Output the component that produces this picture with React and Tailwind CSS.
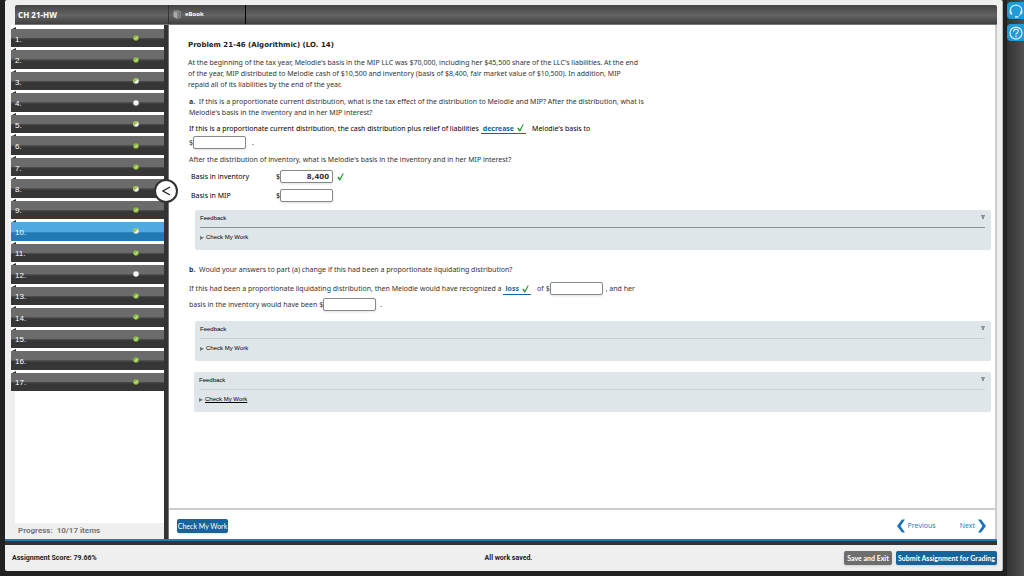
const ITEMS = [
  'full', 'full', 'half', 'empty', 'half', 'full', 'full', 'half', 'full',
  'half', 'full', 'empty', 'full', 'full', 'full', 'full', 'full',
];
const CURRENT = 10;

function StatusDot({ status }) {
  return (
    <svg viewBox="0 0 12 12" className="size-[6px]" aria-label={status}>
      <circle cx="6" cy="6" r="5.5" fill={status === 'full' ? '#8dbb3c' : '#f2f2f2'} />
      {status === 'half' && <path d="M10 2A5.6 5.6 0 1 0 2 10Z" fill="#9bc63f" />}
      {status === 'full' && (
        <path d="M3.5 6.5l2 2 3.5-5" fill="none" stroke="#f4fae4" strokeWidth="1.6" />
      )}
    </svg>
  );
}

function Check() {
  return (
    <svg viewBox="0 0 14 16" className="w-[7px] h-[8px]" aria-label="correct">
      <path d="M0.5 8.5L3.5 7l2 4L11.5 0.5 13.5 1 6.5 15H4.500Z" fill="#2f9c33" />
    </svg>
  );
}

function NavItem({ number, status }) {
  const active = number === CURRENT;
  return (
    <li className="relative flex-1 pt-[3px]">
      <svg viewBox="0 0 4 2" className="absolute left-px top-px w-1 h-[2px]" aria-hidden="true">
        <path d="M0 2L4 0V2Z" fill="#333" />
      </svg>
      <a
        href={`#item-${number}`}
        className={
          'flex h-full items-center justify-between pl-1 pr-[25px] font-[Liberation_Sans,sans-serif] text-[8px] leading-none text-white ' +
          (active
            ? 'bg-[linear-gradient(#4fabdf_50%,#3b93c8_50%,#217ab1_60%)]'
            : 'bg-[linear-gradient(#6b6b6b_48%,#505050_50%,#363636_60%)]')
        }
      >
        <span className="pt-[3px]">{number}.</span>
        <StatusDot status={status} />
      </a>
    </li>
  );
}

function AmountInput({ label, value }) {
  return (
    <span className="inline-flex items-center">
      $
      <input
        type="text"
        aria-label={label}
        defaultValue={value}
        className="h-[13px] w-[53px] rounded-[2px] border border-[#888] bg-white px-[3px] text-right font-[DejaVu_Sans,sans-serif] text-[7px] font-bold text-[#333] shadow-sm"
      />
    </span>
  );
}

function Answer({ children }) {
  return (
    <button type="button" className="inline-flex h-[12px] items-center gap-[3px] border-b border-[#17639c] px-[2px] pt-px font-bold text-[#17639c]">
      {children}
      <Check />
    </button>
  );
}

function Feedback({ className, line, underline }) {
  return (
    <section className={'h-10 rounded-[2px] bg-[#dee6e9] pl-[5px] pr-[6px] font-[Liberation_Sans,sans-serif] text-[6px] text-black ' + className}>
      <div className={'flex h-[18px] items-center justify-between border-b ' + line}>
        <h3>Feedback</h3>
        <button type="button" aria-label="Collapse feedback" className="mb-1">
          <svg viewBox="0 0 8 8" className="size-1">
            <path d="M0 0h8v3H6v5H2V3H0Z" fill="#899398" />
          </svg>
        </button>
      </div>
      <a href="#check" className="flex h-[19px] items-center gap-[2px]">
        <svg viewBox="0 0 8 8" className="size-1" aria-hidden="true">
          <path d="M0 0L8 3.5 0 8Z" fill="#777" />
        </svg>
        <span className={underline ? 'underline' : ''}>Check My Work</span>
      </a>
    </section>
  );
}

function Problem() {
  return (
    <article className="flex-1 pl-[19px] pr-1 pt-[15px] font-[Noto_Sans,sans-serif] text-[7px] leading-[11px] text-[#333] whitespace-nowrap">
      <h1 className="font-[DejaVu_Sans,sans-serif] font-bold text-[#222]">Problem 21-46 (Algorithmic) (LO. 14)</h1>
      <p className="mt-[6px]">
        At the beginning of the tax year, Melodie's basis in the MIP LLC was $70,000, including her $45,500 share of the LLC's liabilities. At the end
        <br />
        of the year, MIP distributed to Melodie cash of $10,500 and inventory (basis of $8,400, fair market value of $10,500). In addition, MIP
        <br />
        repaid all of its liabilities by the end of the year.
      </p>
      <p className="mt-[6px] pl-px">
        <b>a.</b>&nbsp; If this is a proportionate current distribution, what is the tax effect of the distribution to Melodie and MIP? After the distribution, what is
        <br />
        Melodie's basis in the inventory and in her MIP interest?
      </p>
      <div className="mt-1 flex items-center pl-px text-black">
        If this is a proportionate current distribution, the cash distribution plus relief of liabilities
        <span className="mx-[2px] flex"><Answer>decrease</Answer></span>
        <span className="ml-1">Melodie's basis to</span>
      </div>
      <div className="mt-[2px] flex items-center gap-[6px] pl-px">
        <AmountInput label="Change in basis" />.
      </div>
      <p className="mt-[5px] pl-px">After the distribution of inventory, what is Melodie's basis in the inventory and in her MIP interest?</p>
      <div className="mt-[5px] grid grid-cols-[85px_57px_auto] items-center gap-y-[6px] pl-[3px] text-black">
        <span>Basis in inventory</span>
        <AmountInput label="Basis in inventory" value="8,400" />
        <span className="flex pl-1"><Check /></span>
        <span>Basis in MIP</span>
        <AmountInput label="Basis in MIP" />
      </div>
      <Feedback className="ml-[7px] mt-2" line="border-[#899398]" />
      <p className="mt-[14px] pl-px">
        <b>b.</b>&nbsp; Would your answers to part (a) change if this had been a proportionate liquidating distribution?
      </p>
      <div className="mt-[7px] flex items-center pl-px">
        If this had been a proportionate liquidating distribution, then Melodie would have recognized a
        <span className="mx-[2px] flex"><Answer>loss</Answer></span>
        <span className="ml-1 mr-[2px]">of</span>
        <AmountInput label="Recognized amount" />
        <span className="ml-[3px]">, and her</span>
      </div>
      <div className="mt-[3px] flex items-center gap-1 pl-px">
        <span className="flex items-center gap-[2px]">
          basis in the inventory would have been
          <AmountInput label="Inventory basis" />
        </span>
        .
      </div>
      <Feedback className="ml-[7px] mt-[10px]" line="border-[#c4cdd0]" />
      <Feedback className="ml-[6px] mt-[11px]" line="border-[#cdd5d8]" underline />
    </article>
  );
}

function Chevron({ flip }) {
  return (
    <svg viewBox="0 0 16 26" className="w-2 h-[14px]" aria-hidden="true">
      <path d={flip ? 'M0 0H6L16 13 6 26H0L9 13Z' : 'M16 0H10L0 13 10 26H16L7 13Z'} fill="#1672bd" />
    </svg>
  );
}

function Headset() {
  return (
    <svg viewBox="0 0 28 28" className="size-[14px]" fill="none" stroke="#d9e8f0" aria-hidden="true">
      <path d="M5 19C-1 9 6 2 14 2s15 7 9 17" strokeWidth="2.5" />
      <path d="M3 13v5l3 3M25 13v5l-3 3" strokeWidth="3.5" />
      <path d="M22 21c-1 3-3 4-5 4" strokeWidth="1.5" />
      <path d="M12 26h6" strokeWidth="3" />
    </svg>
  );
}

function Help() {
  return (
    <svg viewBox="0 0 28 28" className="size-[14px]" fill="none" stroke="#d9e8f0" aria-hidden="true">
      <circle cx="14" cy="14" r="12" strokeWidth="2.5" />
      <path d="M9.5 11c0-6 9-6 9-1 0 4-4.5 4-4.5 7.5" strokeWidth="2.5" />
      <path d="M14 19.5v3" strokeWidth="3" />
    </svg>
  );
}

export default function App() {
  return (
    <div className="flex min-h-screen bg-[#222] font-[Noto_Sans,sans-serif]">
      <div className="ml-[5px] mb-[5px] flex flex-1 flex-col rounded-[2px] border-r border-[#bbb] bg-[#efefef] pt-[5px]">
        <header className="ml-[10px] mr-[5px] flex h-[20px] rounded-t-[2px] border-b border-[#777] bg-[linear-gradient(#444,#636363_55%,#404040)] text-white">
          <h2 className="flex w-[153px] items-center pl-[3px] text-[8px] font-bold">CH 21-HW</h2>
          <button type="button" className="flex w-[78px] items-center gap-[4px] border-l border-r border-l-[#333] border-r-black pl-1 text-[6px] font-bold">
            <svg viewBox="0 0 16 20" className="w-[8px] h-[10px]" aria-hidden="true">
              <path d="M1 2l8 3v13l-8-4Z" fill="#aaa" />
              <path d="M3 1l4-1 8 3v12l-4 2V5Z" fill="#777" stroke="#999" />
            </svg>
            eBook
          </button>
        </header>

        <div className="flex flex-1">
          <aside className="flex w-[159px] flex-col">
            <nav className="ml-[6px] bg-white pt-px">
              <ol className="flex h-[365px] flex-col">
                {ITEMS.map((status, i) => (
                  <NavItem key={i} number={i + 1} status={status} />
                ))}
              </ol>
            </nav>
            <div className="ml-[10px] flex-1 bg-white" />
            <p className="flex h-4 items-center pl-[13px] font-[Roboto,sans-serif] text-[8px] font-bold text-[#777]">
              Progress:&nbsp; 10/17 items
            </p>
          </aside>

          <div className="relative w-[5px] border-r border-[#777] bg-[#333]">
            <button
              type="button"
              aria-label="Collapse list"
              className="absolute -left-[10px] top-[154px] flex size-6 items-center justify-center rounded-full border-2 border-[#333] bg-white"
            >
              <svg viewBox="0 0 18 20" className="w-[9px] h-[10px]" aria-hidden="true">
                <path d="M16 2L2 10l14 8" fill="none" stroke="#222" strokeWidth="2.5" />
              </svg>
            </button>
          </div>

          <main className="mr-[5px] flex flex-1 flex-col border-r-2 border-[#ccc] bg-white">
            <Problem />
            <div className="flex h-[31px] items-center justify-between border-t-2 border-[#ccc] pl-2 pr-[9px] pt-[3px]">
              <button type="button" className="h-[14px] w-[51px] rounded-[2px] bg-[#17639c] font-[Lato,sans-serif] text-[7px] leading-none whitespace-nowrap text-white shadow">
                Check My Work
              </button>
              <div className="flex gap-6 font-[Open_Sans,sans-serif] text-[7px] font-medium text-[#1672bd]">
                <a href="#previous" className="flex items-center gap-[3px]">
                  <Chevron />
                  Previous
                </a>
                <a href="#next" className="flex items-center gap-[3px]">
                  Next
                  <Chevron flip />
                </a>
              </div>
            </div>
          </main>
        </div>

        <div className="mr-[5px] h-[6px] border-t-2 border-[#217ab1] bg-[#333]" />
        <footer className="grid h-[26px] grid-cols-3 items-center pl-[7px] pr-[5px] font-[Roboto,sans-serif] text-[7px] font-bold text-[#222]">
          <p>Assignment Score: 79.66%</p>
          <p className="pl-[8px] text-center">All work saved.</p>
          <div className="flex justify-end gap-1 font-[Lato,sans-serif] leading-none whitespace-nowrap text-white">
            <button type="button" className="h-[14px] w-[48px] rounded-[2px] bg-[#6e6e6e] shadow">Save and Exit</button>
            <button type="button" className="h-[14px] w-[101px] rounded-[2px] bg-[#17639c] shadow">Submit Assignment for Grading</button>
          </div>
        </footer>
      </div>

      <div className="ml-1 flex w-[17px] flex-col gap-[5px] bg-[linear-gradient(90deg,#333,#505050)] pt-[2px]">
        <button type="button" aria-label="Support" className="flex h-[17px] items-center justify-center rounded-l-[4px] bg-[#219bd7]">
          <Headset />
        </button>
        <button type="button" aria-label="Help" className="flex h-[17px] items-center justify-center rounded-l-[4px] bg-[#219bd7]">
          <Help />
        </button>
      </div>
    </div>
  );
}
